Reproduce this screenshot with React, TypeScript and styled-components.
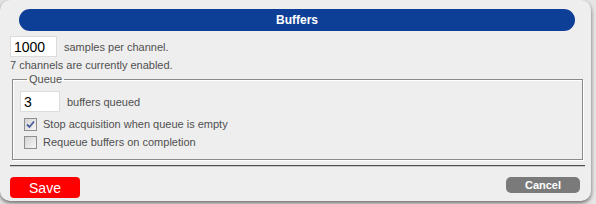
import React from "react";
import styled, { createGlobalStyle } from "styled-components";

const Global = createGlobalStyle`
  html, body { margin: 0; padding: 0; background: #e6e6e6; }
  body { width: 596px; height: 204px; overflow: hidden; font-family: "Liberation Sans", Arial, sans-serif; }
`;

const Dialog = styled.div`
  box-sizing: border-box;
  width: 591px;
  height: 201px;
  background: #eeeeee;
  border-radius: 10px;
  box-shadow: 0 2px 4px rgba(0, 0, 0, 0.55);
  padding: 9px 6px 0 10px;
  display: flex;
  flex-direction: column;
`;

const TitleBar = styled.div`
  height: 22px;
  margin: 0 10px 5px 9px;
  border-radius: 11px;
  background: #0e3f96;
  color: #fff;
  font-weight: bold;
  font-size: 12px;
  display: flex;
  align-items: center;
  justify-content: center;
`;

const Row = styled.div`
  display: flex;
  align-items: center;
  gap: 7px;
`;

const NumInput = styled.input<{ $w: number }>`
  box-sizing: border-box;
  width: ${(p) => p.$w}px;
  height: 21px;
  border: 1px solid #dcdcdc;
  background: #fff;
  padding: 0 0 0 3px;
  margin: 0;
  font-family: "Liberation Sans", Arial, sans-serif;
  font-size: 14px;
  color: #000;
  outline: none;
`;

const Label = styled.span`
  font-size: 11px;
  color: #505050;
`;

const Info = styled.div`
  font-size: 11px;
  color: #505050;
  line-height: 13px;
  margin-top: 2px;
`;

const Group = styled.fieldset`
  margin: 1px 2px 0;
  padding: 5px 7px 8px 7px;
  border: 1px solid #8a8a8a;
  box-shadow: inset 1px 1px 0 #fff, 1px 1px 0 #fff;
  min-width: 0;
`;

const Legend = styled.legend`
  font-size: 11px;
  line-height: 13px;
  color: #505050;
  padding: 0 2px;
  margin-left: 7px;
`;

const CheckRow = styled.label`
  display: flex;
  align-items: center;
  height: 18px;
  padding-left: 4px;
  gap: 6px;
  font-size: 11px;
  color: #505050;
`;

const Box = styled.span`
  box-sizing: border-box;
  width: 13px;
  height: 13px;
  border: 1px solid #8e8f8f;
  background: linear-gradient(135deg, #d5d5d5 0%, #f6f6f6 100%);
  display: flex;
  align-items: center;
  justify-content: center;
`;

const Rule = styled.div`
  height: 1px;
  margin-top: 5px;
  border-top: 1px solid #4f4f4f;
  background: #c8c8c8;
`;

const Footer = styled.div`
  display: flex;
  justify-content: space-between;
  align-items: flex-start;
  margin-top: 10px;
`;

const SaveButton = styled.button`
  width: 70px;
  height: 21px;
  border: none;
  border-radius: 4px;
  background: #ff0000;
  color: #fff;
  font-family: "Liberation Sans", Arial, sans-serif;
  font-size: 14px;
  padding: 0;
`;

const CancelButton = styled.button`
  width: 74px;
  height: 16px;
  margin-right: 5px;
  border: none;
  border-radius: 5px;
  background: #7a7a7a;
  color: #fff;
  font-family: "Liberation Sans", Arial, sans-serif;
  font-weight: bold;
  font-size: 11px;
  padding: 0;
`;

function Check({ checked, children }: { checked?: boolean; children: React.ReactNode }) {
  return (
    <CheckRow>
      <Box>
        {checked && (
          <svg width="9" height="9" viewBox="0 0 9 9">
            <path d="M1 4.5 L3.5 7 L8 1.5" fill="none" stroke="#4b5d9b" strokeWidth="1.8" />
          </svg>
        )}
      </Box>
      {children}
    </CheckRow>
  );
}

export default function App() {
  return (
    <>
      <Global />
      <Dialog>
        <TitleBar>Buffers</TitleBar>
        <Row>
          <NumInput $w={47} defaultValue="1000" />
          <Label>samples per channel.</Label>
        </Row>
        <Info>7 channels are currently enabled.</Info>
        <Group>
          <Legend>Queue</Legend>
          <Row style={{ marginBottom: 3 }}>
            <NumInput $w={40} defaultValue="3" />
            <Label>buffers queued</Label>
          </Row>
          <Check checked>Stop acquisition when queue is empty</Check>
          <Check>Requeue buffers on completion</Check>
        </Group>
        <Rule />
        <Footer>
          <SaveButton>Save</SaveButton>
          <CancelButton>Cancel</CancelButton>
        </Footer>
      </Dialog>
    </>
  );
}
